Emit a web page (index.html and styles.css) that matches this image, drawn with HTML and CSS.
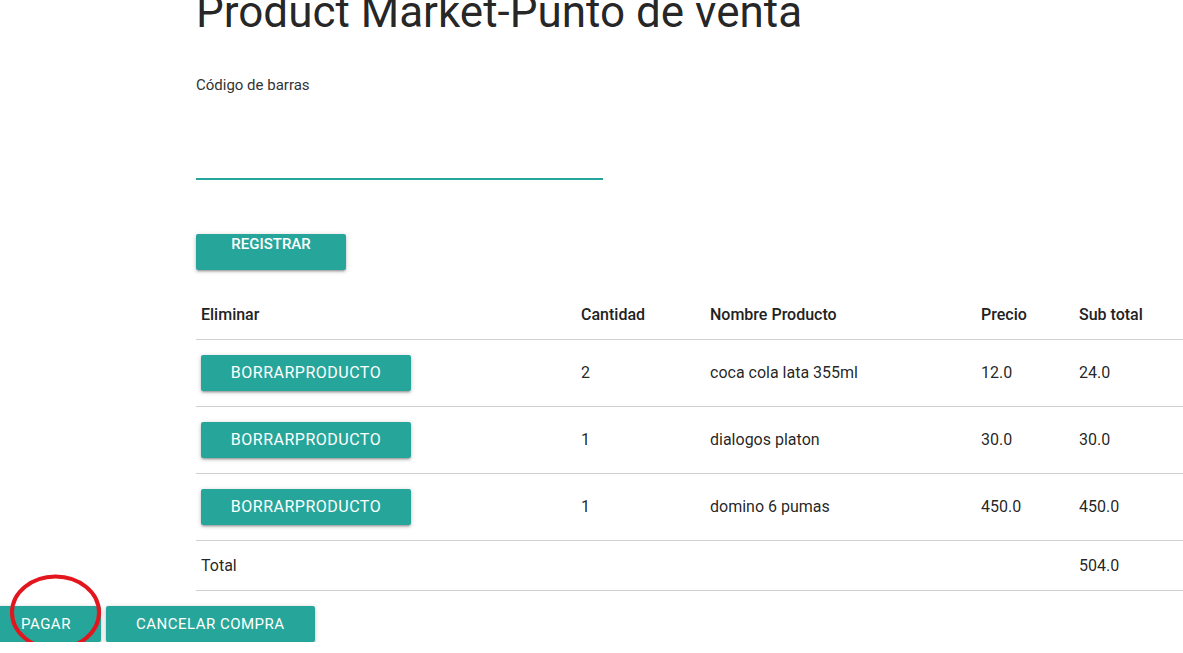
FILE: index.html
```html
<!DOCTYPE html>
<html lang="es">
<head>
    <meta charset="UTF-8">
    <meta name="viewport" content="width=device-width, initial-scale=1.0">
    <title>Product Market-Punto de venta</title>
    <link rel="stylesheet" href="styles.css">
</head>
<body>
    <main class="container">
        <h1 class="title">Product Market-Punto de venta</h1>

        <form class="barcode-form">
            <label for="codigo">Código de barras</label>
            <input type="text" id="codigo" class="barcode-input">
            <button type="submit" class="btn btn-register">REGISTRAR</button>
        </form>

        <table class="cart">
            <thead>
                <tr>
                    <th class="col-delete">Eliminar</th>
                    <th class="col-qty">Cantidad</th>
                    <th class="col-name">Nombre Producto</th>
                    <th class="col-price">Precio</th>
                    <th class="col-sub">Sub total</th>
                </tr>
            </thead>
            <tbody>
                <tr>
                    <td><button class="btn btn-row">BORRARPRODUCTO</button></td>
                    <td>2</td>
                    <td>coca cola lata 355ml</td>
                    <td>12.0</td>
                    <td>24.0</td>
                </tr>
                <tr>
                    <td><button class="btn btn-row">BORRARPRODUCTO</button></td>
                    <td>1</td>
                    <td>dialogos platon</td>
                    <td>30.0</td>
                    <td>30.0</td>
                </tr>
                <tr>
                    <td><button class="btn btn-row">BORRARPRODUCTO</button></td>
                    <td>1</td>
                    <td>domino 6 pumas</td>
                    <td>450.0</td>
                    <td>450.0</td>
                </tr>
                <tr class="total-row">
                    <td>Total</td>
                    <td></td>
                    <td></td>
                    <td></td>
                    <td>504.0</td>
                </tr>
            </tbody>
        </table>
    </main>

    <div class="actions">
        <button class="btn btn-action btn-pay">PAGAR</button>
        <button class="btn btn-action">CANCELAR COMPRA</button>
        <svg class="circle-mark" width="100" height="80" viewBox="0 0 100 80">
            <ellipse cx="51.5" cy="38.5" rx="43.5" ry="36" fill="none" stroke="#e3161e" stroke-width="4"/>
        </svg>
    </div>
</body>
</html>
```

FILE: styles.css
```css
body {
    margin: 0;
    font-family: Roboto, "Liberation Sans", sans-serif;
    font-size: 16px;
    color: rgba(0, 0, 0, 0.87);
    background-color: #fff;
    overflow: hidden;
}

.container {
    margin-left: 196px;
}

.title {
    margin: -11px 0 0 0;
    font-size: 44px;
    font-weight: 400;
    line-height: 46px;
    color: rgba(0, 0, 0, 0.87);
}

.barcode-form {
    display: flex;
    flex-direction: column;
    align-items: flex-start;
    margin-top: 41px;
}

.barcode-form label {
    font-size: 15px;
    line-height: 18px;
    color: #333;
}

.barcode-input {
    width: 407px;
    height: 40px;
    margin-top: 44px;
    padding: 0;
    border: none;
    border-bottom: 2px solid #26a69a;
    outline: none;
    font-family: inherit;
    font-size: 16px;
}

.btn {
    border: none;
    border-radius: 2px;
    background-color: #26a69a;
    color: #fff;
    font-family: inherit;
    letter-spacing: 0.5px;
    text-transform: uppercase;
    cursor: pointer;
    box-shadow: 0 2px 2px 0 rgba(0, 0, 0, 0.14), 0 3px 1px -2px rgba(0, 0, 0, 0.12), 0 1px 5px 0 rgba(0, 0, 0, 0.2);
}

.btn-register {
    margin-top: 54px;
    width: 150px;
    height: 36px;
    padding: 0 0 16px;
    font-size: 15px;
    font-weight: 500;
    line-height: 20px;
    letter-spacing: 0;
}

.cart {
    width: 987px;
    margin-top: 20px;
    border-collapse: collapse;
    table-layout: fixed;
}

.cart th,
.cart td {
    padding: 0 5px;
    height: 49px;
    text-align: left;
    vertical-align: middle;
    font-size: 16px;
    line-height: 20px;
}

.cart th {
    font-weight: 500;
    color: #222;
}

.cart tr {
    border-bottom: 1px solid #d0d0d0;
}

.cart tbody td {
    height: 66px;
}

.cart tbody .total-row td {
    height: 49px;
}

.col-delete { width: 370px; }
.col-qty { width: 119px; }
.col-name { width: 261px; }
.col-price { width: 88px; }
.col-sub { width: 99px; }

.btn-row {
    width: 210px;
    height: 36px;
    padding: 0;
    font-size: 16px;
    line-height: 36px;
}

.actions {
    position: relative;
    display: flex;
    gap: 5px;
    margin-top: 15px;
    margin-left: -9px;
}

.btn-action {
    height: 36px;
    padding: 0 30px;
    font-size: 15px;
    line-height: 36px;
}

.circle-mark {
    position: absolute;
    left: 13px;
    top: -32px;
    pointer-events: none;
}
```
